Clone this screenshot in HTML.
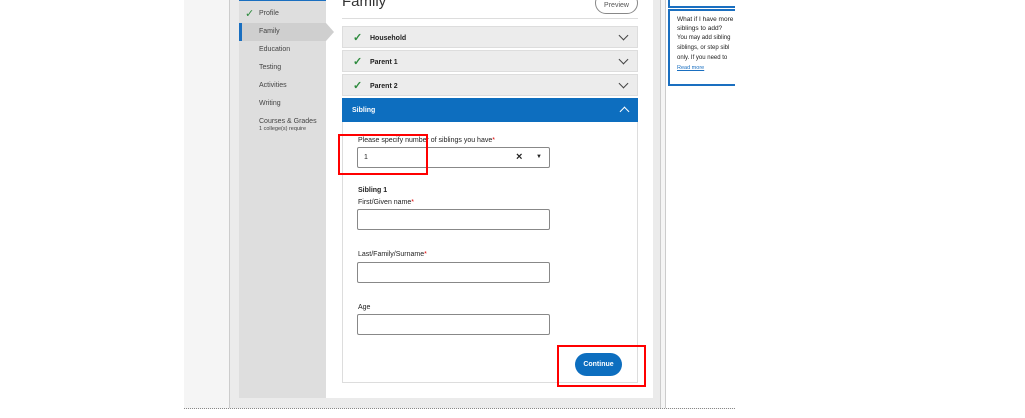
<!DOCTYPE html><html><head><style>
*{box-sizing:border-box;margin:0;padding:0}
body{width:1025px;height:418px;background:#fff;font-family:"Liberation Sans",sans-serif;position:relative;overflow:hidden;color:#222}
.a{position:absolute}
.ok{color:#2e8b3e;font-size:11px}
.acc{position:absolute;left:342px;width:296px;height:22px;background:#ececec;border:1px solid #ddd;font-size:7px;font-weight:bold}
.chev{position:absolute;right:10px;top:5px;width:7px;height:7px;border-right:1px solid #444;border-bottom:1px solid #444;transform:rotate(45deg)}
.lbl{position:absolute;left:358px;font-size:7px}
.inp{position:absolute;left:357px;width:193px;height:21px;border:1px solid #888;border-radius:2px;background:#fff}
.nav{position:absolute;left:259px;font-size:7px;color:#444}
</style></head><body>
<div class="a" style="left:184px;top:0;width:551px;height:409px;background:#f5f5f5;border-bottom:1px dotted #888"></div>
<div class="a" style="left:229px;top:0;width:432px;height:408px;background:#ebebeb;border-left:1px solid #ccc;border-right:1px solid #ccc"></div>
<div class="a" style="left:239px;top:0;width:414px;height:398px;background:#fff"></div>
<div class="a" style="left:239px;top:0;width:87px;height:398px;background:#dedede"></div>
<div class="a" style="left:239px;top:0;width:87px;height:1px;background:#1a6fc0"></div>
<div class="a" style="left:239px;top:23px;width:87px;height:18px;background:#cfcfcf;border-left:3px solid #1a6fc0"></div>
<div class="a" style="left:326px;top:23px;width:0;height:0;border-top:9px solid transparent;border-bottom:9px solid transparent;border-left:8px solid #cfcfcf"></div>
<div class="a ok" style="left:245px;top:7px">✓</div>
<div class="nav" style="top:10px">Profile</div>
<div class="nav" style="top:28px">Family</div>
<div class="nav" style="top:46px">Education</div>
<div class="nav" style="top:64px">Testing</div>
<div class="nav" style="top:82px">Activities</div>
<div class="nav" style="top:100px">Writing</div>
<div class="nav" style="top:118px">Courses &amp; Grades<br><span style="font-size:5.5px">1 college(s) require</span></div>
<div class="a" style="left:342px;top:-7px;font-size:15px;color:#333">Family</div>
<div class="a" style="left:595px;top:-8px;width:43px;height:22px;border:1px solid #888;border-radius:11px;font-size:7px;color:#555;text-align:center;padding-top:9px;background:#fff">Preview</div>
<div class="a" style="left:342px;top:18px;width:296px;height:1px;background:#ddd"></div>
<div class="acc" style="top:26px"><span class="a ok" style="left:10px;top:4px">✓</span><span class="a" style="left:27px;top:8px">Household</span><div class="chev"></div></div>
<div class="acc" style="top:50px"><span class="a ok" style="left:10px;top:4px">✓</span><span class="a" style="left:27px;top:8px">Parent 1</span><div class="chev"></div></div>
<div class="acc" style="top:74px"><span class="a ok" style="left:10px;top:4px">✓</span><span class="a" style="left:27px;top:8px">Parent 2</span><div class="chev"></div></div>
<div class="a" style="left:342px;top:98px;width:296px;height:24px;background:#0d6ebf;color:#fff;font-size:7px;font-weight:bold"><span class="a" style="left:10px;top:9px">Sibling</span><div class="a" style="right:10px;top:10px;width:7px;height:7px;border-left:1px solid #fff;border-top:1px solid #fff;transform:rotate(45deg)"></div></div>
<div class="a" style="left:342px;top:122px;width:296px;height:261px;border:1px solid #ddd;border-top:none"></div>
<div class="lbl" style="top:137px">Please specify number of siblings you have<span style="color:#d00">*</span></div>
<div class="inp" style="top:147px"><span class="a" style="left:6px;top:6px;font-size:7px">1</span><span class="a" style="left:158px;top:3px;font-size:11px;font-weight:bold">×</span><span class="a" style="left:178px;top:6px;font-size:6px">▼</span></div>
<div class="lbl" style="top:187px;font-weight:bold">Sibling 1</div>
<div class="lbl" style="top:199px">First/Given name<span style="color:#d00">*</span></div>
<div class="inp" style="top:209px"></div>
<div class="lbl" style="top:251px">Last/Family/Surname<span style="color:#d00">*</span></div>
<div class="inp" style="top:262px"></div>
<div class="lbl" style="top:304px">Age</div>
<div class="inp" style="top:314px"></div>
<div class="a" style="left:575px;top:353px;width:47px;height:23px;border-radius:12px;background:#0d6ebf;color:#fff;font-size:7px;font-weight:bold;text-align:center;line-height:23px">Continue</div>
<div class="a" style="left:338px;top:134px;width:90px;height:41px;border:2px solid #f00"></div>
<div class="a" style="left:557px;top:345px;width:89px;height:42px;border:2px solid #f00"></div>
<div class="a" style="left:665px;top:0;width:70px;height:408px;background:#fff;border-left:1px solid #ccc"></div>
<div class="a" style="left:668px;top:0;width:67px;height:8px;border-left:2px solid #1a6fc0;border-bottom:2px solid #1a6fc0"></div>
<div class="a" style="left:668px;top:9px;width:67px;height:77px;border:2px solid #1a6fc0;border-right:none;overflow:hidden;font-size:6.5px;line-height:9px;padding:4px 0 0 7px;white-space:nowrap">What if I have more<br>siblings to add?<br><span style="font-size:6px">You may add sibling<br>siblings, or step sibl<br>only. If you need to</span><br><span style="color:#1a6fc0;text-decoration:underline;font-size:5.5px">Read more</span></div>
</body></html>
